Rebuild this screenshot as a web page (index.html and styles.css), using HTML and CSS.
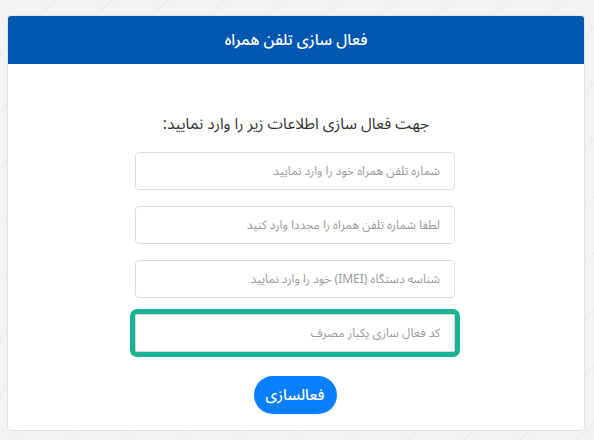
FILE: index.html
```html
<!DOCTYPE html>
<html lang="fa" dir="rtl">
<head>
<meta charset="utf-8">
<title>فعال سازی تلفن همراه</title>
<link rel="stylesheet" href="styles.css">
</head>
<body>
<div class="card">
  <div class="card-header">فعال سازی تلفن همراه</div>
  <div class="card-body">
    <p class="intro">جهت فعال سازی اطلاعات زیر را وارد نمایید:</p>
    <form class="form">
      <input class="field" type="text" placeholder="شماره تلفن همراه خود را وارد نمایید">
      <input class="field" type="text" placeholder="لطفا شماره تلفن همراه را مجددا وارد کنید">
      <input class="field" type="text" placeholder="شناسه دستگاه (IMEI) خود را وارد نمایید">
      <input class="field field-highlight" type="text" placeholder="کد فعال سازی یکبار مصرف">
      <button class="btn" type="button">فعالسازی</button>
    </form>
  </div>
</div>
</body>
</html>
```

FILE: styles.css
```css
* { box-sizing: border-box; }
html, body { height: 100%; }
body {
  margin: 0;
  background-color: #f3f3f4;
  background-image: repeating-linear-gradient(135deg, rgba(0,0,0,0) 0, rgba(0,0,0,0) 38px, rgba(0,0,0,0.018) 38px, rgba(0,0,0,0.018) 40px);
  font-family: "Noto Sans Arabic", "Vazirmatn", "DejaVu Sans", sans-serif;
  color: #333;
  padding: 15px 9px 0 7px;
}
.card {
  height: 416px;
  background: #fff;
  border: 1px solid #e3e3e3;
  border-radius: 4px;
  overflow: hidden;
}
.card-header {
  height: 49px;
  margin: -1px -1px 0 -1px;
  background: #0057b2;
  color: #fff;
  font-size: 15.5px;
  font-weight: 500;
  display: flex;
  align-items: center;
  justify-content: center;
  border-radius: 4px 4px 0 0;
}
.card-body {
  display: flex;
  flex-direction: column;
  align-items: center;
  padding-top: 48px;
}
.intro {
  margin: 0 0 16px 0;
  height: 24px;
  line-height: 24px;
  font-size: 15.5px;
  color: #333;
}
.form {
  width: 320px;
  margin-right: 2px;
  display: flex;
  flex-direction: column;
  align-items: center;
  gap: 16px;
}
.field {
  width: 100%;
  height: 38px;
  border: 1px solid #dedede;
  border-radius: 4px;
  padding: 0 14px;
  font-family: inherit;
  font-size: 12px;
  color: #555;
  background: #fff;
  direction: rtl;
  text-align: right;
}
.field::placeholder { color: #9a9a9a; }
.field-highlight {
  outline: 5px solid #1ab394;
  outline-offset: 0;
  border-color: #d8d8d8;
  border-radius: 2px;
}
.btn {
  margin-top: 8px;
  width: 83px;
  height: 38px;
  border: none;
  border-radius: 19px;
  background: #0a7ffd;
  color: #fff;
  font-family: inherit;
  font-size: 15px;
  font-weight: 500;
}
```
